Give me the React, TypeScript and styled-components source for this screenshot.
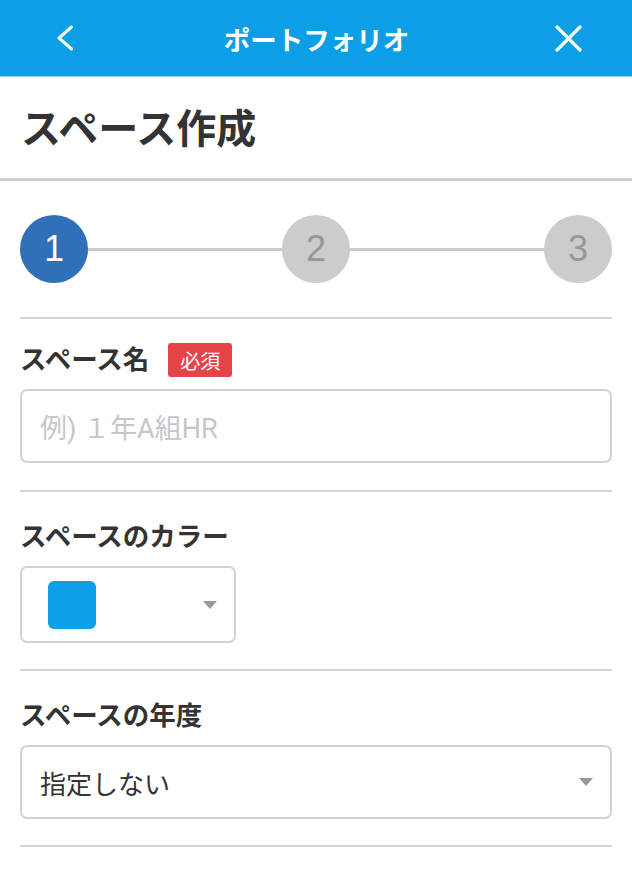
import React from "react";
import styled, { createGlobalStyle } from "styled-components";

const Global = createGlobalStyle`
  html, body { margin: 0; padding: 0; background: #fff; }
  body { font-family: "Noto Sans CJK JP", "Noto Sans", sans-serif; color: #333; }
  * { box-sizing: border-box; }
`;

const Header = styled.header`
  height: 77px;
  background: #0c9fe6;
  border-bottom: 1px solid #9fd3ef;
  display: flex;
  align-items: center;
  padding: 0 49px 0 50px;
`;

const IconBox = styled.div`
  width: 30px;
  height: 30px;
  display: flex;
  align-items: center;
  justify-content: center;
`;

const HeaderTitle = styled.h1`
  flex: 1;
  margin: 0;
  text-align: center;
  color: #fff;
  font-size: 26.5px;
  font-weight: 700;
`;

const PageTitle = styled.div`
  height: 104px;
  display: flex;
  align-items: center;
  padding: 0 0 3px 21px;
  font-size: 40px;
  font-weight: 700;
  color: #333;
  border-bottom: 3px solid #cfcfcf;
`;

const Content = styled.main`
  padding: 0 20px;
`;

const Stepper = styled.div`
  display: flex;
  align-items: center;
  padding: 34px 0;
  border-bottom: 2px solid #d4d4d4;
`;

const StepCircle = styled.div<{ $active?: boolean }>`
  width: 68px;
  height: 68px;
  border-radius: 50%;
  flex: none;
  display: flex;
  align-items: center;
  justify-content: center;
  background: ${(p) => (p.$active ? "#3070b8" : "#cccccc")};
  color: ${(p) => (p.$active ? "#fff" : "#979797")};
  font-family: "Liberation Sans", Arial, sans-serif;
  font-size: 36px;
`;

const StepLine = styled.div`
  flex: 1;
  height: 3px;
  background: #cccccc;
`;

const Section = styled.section<{ $top?: number; $bottom?: number }>`
  padding: ${(p) => p.$top ?? 28}px 0 ${(p) => p.$bottom ?? 26}px;
  border-bottom: 2px solid #d4d4d4;
`;

const LabelRow = styled.div`
  height: 34px;
  display: flex;
  align-items: center;
  gap: 19px;
  margin-bottom: 12px;
`;

const Label = styled.span`
  font-size: 26.5px;
  font-weight: 700;
  color: #333;
  line-height: 1;
  margin-top: -3px;
`;

const Badge = styled.span`
  width: 64px;
  height: 34px;
  border-radius: 3px;
  background: #e54448;
  color: #fff;
  font-size: 20px;
  display: flex;
  align-items: center;
  justify-content: center;
`;

const Field = styled.div<{ $width?: string; $height?: number }>`
  width: ${(p) => p.$width ?? "100%"};
  height: ${(p) => p.$height ?? 74}px;
  border: 2px solid #d2d2d2;
  border-radius: 7px;
  display: flex;
  align-items: center;
  padding: 0 17px 0 18px;
  font-size: 26px;
`;

const Placeholder = styled.span`
  color: #c6c6c6;
  font-size: 27px;
  font-family: Roboto, "Noto Sans CJK JP", sans-serif;
`;

const Value = styled.span`
  flex: 1;
  color: #333;
`;

const Swatch = styled.div`
  width: 48px;
  height: 48px;
  border-radius: 6px;
  background: #0c9fe6;
  margin-left: 8px;
  margin-right: auto;
`;

const Caret = styled.div`
  width: 0;
  height: 0;
  border-left: 7px solid transparent;
  border-right: 7px solid transparent;
  border-top: 8px solid #999;
  flex: none;
`;

export default function App() {
  return (
    <>
      <Global />
      <Header>
        <IconBox>
          <svg width="18" height="26" viewBox="0 0 18 26" fill="none">
            <polyline points="15.5,2 3,13 15.5,24" stroke="#fff" strokeWidth="3" strokeLinecap="round" strokeLinejoin="round" />
          </svg>
        </IconBox>
        <HeaderTitle>ポートフォリオ</HeaderTitle>
        <IconBox>
          <svg width="27" height="27" viewBox="0 0 27 27" fill="none">
            <line x1="2" y1="2" x2="25" y2="25" stroke="#fff" strokeWidth="3.2" strokeLinecap="round" />
            <line x1="25" y1="2" x2="2" y2="25" stroke="#fff" strokeWidth="3.2" strokeLinecap="round" />
          </svg>
        </IconBox>
      </Header>
      <PageTitle>スペース作成</PageTitle>
      <Content>
        <Stepper>
          <StepCircle $active>1</StepCircle>
          <StepLine />
          <StepCircle>2</StepCircle>
          <StepLine />
          <StepCircle>3</StepCircle>
        </Stepper>
        <Section $top={24} $bottom={27}>
          <LabelRow>
            <Label>スペース名</Label>
            <Badge>必須</Badge>
          </LabelRow>
          <Field>
            <Placeholder>例) １年A組HR</Placeholder>
          </Field>
        </Section>
        <Section>
          <LabelRow>
            <Label>スペースのカラー</Label>
          </LabelRow>
          <Field $width="216px" $height={77}>
            <Swatch />
            <Caret />
          </Field>
        </Section>
        <Section>
          <LabelRow>
            <Label>スペースの年度</Label>
          </LabelRow>
          <Field>
            <Value>指定しない</Value>
            <Caret />
          </Field>
        </Section>
      </Content>
    </>
  );
}
